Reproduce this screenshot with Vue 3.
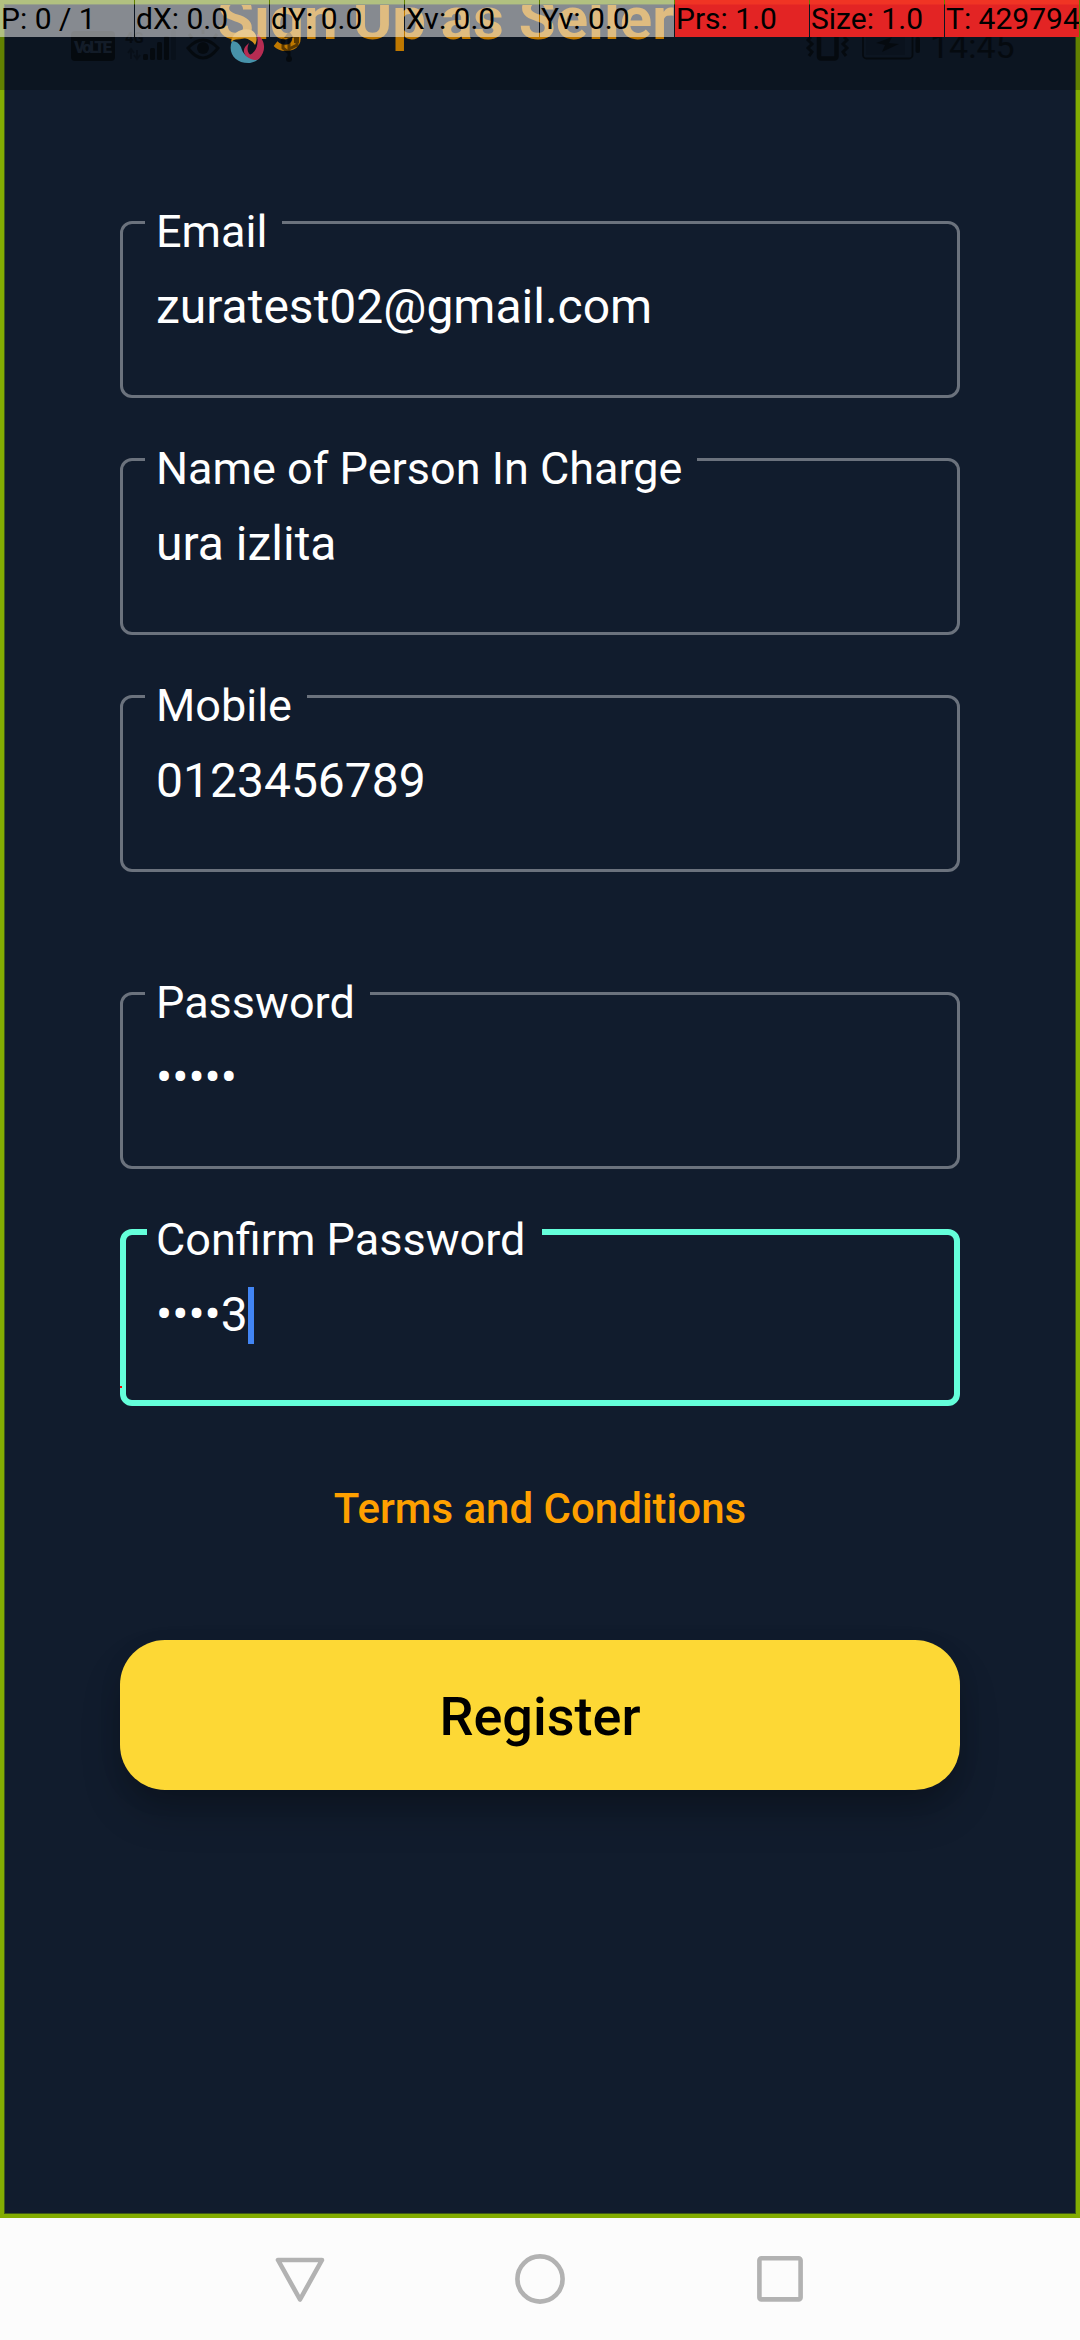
<script setup>
import { ref } from 'vue'

const contactFields = ref([
  { label: 'Email', value: 'zuratest02@gmail.com' },
  { label: 'Name of Person In Charge', value: 'ura izlita' },
  { label: 'Mobile', value: '0123456789' },
])

const passwordFields = ref([
  { label: 'Password', value: '•••••', focused: false },
  { label: 'Confirm Password', value: '••••3', focused: true },
])

const pointerCells = [
  { text: 'P: 0 / 1' },
  { text: 'dX: 0.0' },
  { text: 'dY: 0.0' },
  { text: 'Xv: 0.0' },
  { text: 'Yv: 0.0' },
  { text: 'Prs: 1.0', hot: true },
  { text: 'Size: 1.0', hot: true },
  { text: 'T: 429794', hot: true },
]
</script>

<template>
  <div class="device">
    <main class="screen">
      <h1 class="title">Sign Up as Seller</h1>

      <form class="form" @submit.prevent>
        <div class="group">
          <div v-for="f in contactFields" :key="f.label" class="field">
            <span class="label">{{ f.label }}</span>
            <span class="value">{{ f.value }}</span>
          </div>
        </div>

        <div class="group">
          <div
            v-for="f in passwordFields"
            :key="f.label"
            class="field"
            :class="{ focused: f.focused }"
          >
            <span class="label">{{ f.label }}</span>
            <span class="value">{{ f.value }}</span>
            <span v-if="f.focused" class="caret"></span>
            <span v-if="f.focused" class="touch"></span>
          </div>
        </div>

        <a class="terms">Terms and Conditions</a>
        <button class="register" type="submit">Register</button>
      </form>
      <div class="edge"></div>
    </main>

    <nav class="navbar">
      <svg viewBox="0 0 60 60"><path d="M8 10.5H52L30 50Z" transform="translate(0 .5)" stroke-linejoin="round" /></svg>
      <svg viewBox="0 0 60 60"><circle cx="30" cy="30" r="22.6" /></svg>
      <svg viewBox="0 0 60 60"><rect x="9.4" y="9.2" width="41.2" height="41.2" rx="2" /></svg>
    </nav>

    <div class="statusbar">
      <svg class="icons" viewBox="0 0 1080 90">
        <g class="ink">
          <rect x="71" y="31" width="44" height="30" rx="4" />
          <text class="volte" x="74" y="53" textLength="38">VoLTE</text>
          <text class="net" x="125" y="43">4G</text>
          <path d="M131 50v9m-3-6 3-4 3 4M137 50v9m-3-4 3 4 3-4" class="thin" opacity=".5" />
          <rect x="143" y="54" width="5" height="6" rx="1.5" />
          <rect x="150" y="48" width="5" height="12" rx="1.5" />
          <rect x="157" y="42" width="5" height="18" rx="1.5" />
          <rect x="164" y="36" width="5" height="24" rx="1.5" />
          <rect x="171" y="30" width="5" height="30" rx="1.5" opacity=".3" />
          <path class="line" d="M188 48Q203 32 218 48Q203 68 188 48ZM192 38l-3-4M203 34v-4M214 38l3-4" />
          <circle cx="203" cy="48" r="6" />
          <path class="line" d="M289 36v23M289 53l-6-5v-6M289 49l8-4v-5" />
          <path d="M284 38 289 31l5 7Z" />
          <circle cx="289" cy="59" r="3" />
          <circle cx="283" cy="41" r="2.5" />
          <rect x="294" y="37" width="5" height="6" />
        </g>
        <g class="logo">
          <path fill="#4792aa" d="M232 41C227 53 236 64 250 63C256 62 259 59 260 56C251 61 243 56 241 47C239 43 236 41 232 41Z" />
          <path fill="#b72c52" d="M257 34C265 40 267 50 259 59C256 61 251 60 246 56C256 54 259 46 257 34ZM246 56C242 51 244 47 249 43C246 50 248 54 252 56Z" />
          <path fill="#d4951f" d="M231 42C232 33 242 27 251 30C257 33 258 39 255 45C251 38 239 35 231 42Z" />
        </g>
        <g class="ink">
          <rect class="bold" x="819" y="29" width="17.5" height="29.5" rx="2" />
          <path class="line" d="M811 37l-3 3 4 4-4 4 4 4-3 4M844 37l3 3-4 4 4 4-4 4 3 4" />
          <rect class="thin" x="863" y="29" width="49.5" height="29.5" rx="3.5" />
          <rect x="866" y="32" width="39" height="23" opacity=".2" />
          <path d="M876 43l16-6-3 6 10 1-17 8 3-7Z" />
          <rect x="915.5" y="37" width="4.5" height="16" rx="2" />
          <text class="clock" x="930" y="58">14:45</text>
        </g>
      </svg>
    </div>

    <div class="pointer">
      <span v-for="c in pointerCells" :key="c.text" class="cell" :class="{ hot: c.hot }">{{ c.text }}</span>
    </div>
  </div>
</template>

<style>
body {
  margin: 0;
}
</style>

<style scoped>
.device {
  position: relative;
  display: flex;
  flex-direction: column;
  width: 1080px;
  height: 2340px;
  overflow: hidden;
  background: #111c2d;
  font-family: Roboto, 'Noto Sans', sans-serif;
}

.screen {
  position: relative;
  display: flex;
  flex-direction: column;
  height: 2218px;
  overflow: hidden;
}

/* The heading is scrolled part of the way out of the viewport */
.title {
  margin: -17px 0 0 217px;
  height: 72px;
  line-height: 72px;
  font-size: 60px;
  font-weight: 700;
  color: #ffa000;
  white-space: nowrap;
}

.form {
  display: flex;
  flex-direction: column;
  padding: 166px 120px 0;
}

.group {
  display: flex;
  flex-direction: column;
  gap: 60px;
  margin-bottom: 120px;
}

.group + .group {
  margin-bottom: 0;
}

.field {
  position: relative;
  display: flex;
  box-sizing: border-box;
  height: 177px;
  padding: 55px 0 0 33px;
  border: 3px solid #6b727d;
  border-radius: 12px;
  line-height: 56px;
  font-size: 48px;
  color: #fff;
}

.field.focused {
  border: 6px solid #64ffda;
  padding: 52px 0 0 30px;
}

.label {
  position: absolute;
  top: -19px;
  left: 22px;
  padding: 0 15px 0 11px;
  background: #111c2d;
  line-height: 53px;
  font-size: 45px;
  white-space: nowrap;
}

.focused .label {
  top: -22px;
  left: 21px;
  padding: 0 17px 0 9px;
}

.value {
  height: 56px;
}

.caret {
  width: 6px;
  height: 57px;
  background: #4285f4;
}

.touch {
  position: absolute;
  left: -6px;
  bottom: 12px;
  width: 2px;
  height: 2px;
  background: #f00;
}

.terms {
  margin-top: 78px;
  line-height: 50px;
  text-align: center;
  font-size: 42px;
  font-weight: 500;
  color: #ffa000;
}

.register {
  height: 150px;
  margin-top: 105.5px;
  padding: 4px 0 0;
  border: 0;
  border-radius: 45px;
  background: #fdd835;
  box-shadow: 0 24px 40px -4px rgba(0, 0, 0, 0.26), 0 8px 24px -2px rgba(0, 0, 0, 0.1);
  font-family: inherit;
  font-size: 54px;
  font-weight: 500;
  color: #000;
}

.edge {
  position: absolute;
  inset: 0;
  border: 4px solid #83ad02;
  box-shadow: inset 0 0 0 1px #3f5a19;
}

.navbar {
  display: flex;
  justify-content: center;
  align-items: center;
  gap: 180px;
  height: 122px;
  background: #fcfcfc;
}

.navbar svg {
  width: 60px;
  height: 60px;
  fill: none;
  stroke: #b2b2b2;
  stroke-width: 4.6;
}

.statusbar {
  position: absolute;
  top: 0;
  left: 0;
  width: 1080px;
  height: 90px;
  background: rgba(0, 0, 0, 0.25);
}

.icons {
  display: block;
  width: 1080px;
  height: 90px;
}

.ink {
  fill: #000;
  opacity: 0.52;
}

.ink .line,
.ink .thin,
.ink .bold {
  fill: none;
  stroke: #000;
  stroke-width: 3;
}

.ink .thin {
  stroke-width: 1.8;
}

.ink .bold {
  stroke-width: 4.5;
}

.ink .volte {
  fill: #1b2430;
  font-size: 17px;
  font-weight: 900;
}

.net {
  font-size: 15px;
  font-weight: 700;
}

.clock {
  font-size: 34px;
}

.pointer {
  position: absolute;
  top: 0;
  left: 0;
  display: flex;
  width: 1080px;
  height: 37px;
  overflow: hidden;
}

.cell {
  box-sizing: border-box;
  flex: none;
  width: 134px;
  margin-right: 1px;
  height: 37px;
  padding-left: 1px;
  overflow: hidden;
  background: rgba(255, 255, 255, 0.5);
  line-height: 37px;
  font-size: 30px;
  color: #000;
  white-space: nowrap;
}

.cell.hot {
  background: linear-gradient(#f03424 4px, #e32424 5px);
}
</style>
